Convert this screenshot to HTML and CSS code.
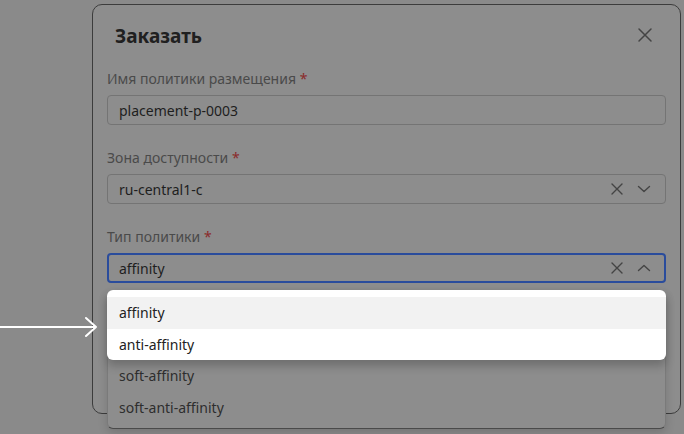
FILE: index.html
```html
<!DOCTYPE html>
<html lang="ru">
<head>
<meta charset="utf-8">
<link rel="stylesheet" href="styles.css">
</head>
<body>
<div class="modal">
  <div class="header">
    <div class="title">Заказать</div>
    <svg class="close" width="16" height="16" viewBox="0 0 16 16"><path d="M2 2L14 14M14 2L2 14" stroke="#444" stroke-width="1.5" fill="none" stroke-linecap="round"/></svg>
  </div>
  <div class="fields">
    <div class="field">
      <div class="label">Имя политики размещения <span class="req">*</span></div>
      <div class="input"><span class="val">placement-p-0003</span></div>
    </div>
    <div class="field">
      <div class="label">Зона доступности <span class="req">*</span></div>
      <div class="input"><span class="val">ru-central1-c</span>
        <span class="icons">
          <svg width="14" height="14" viewBox="0 0 14 14"><path d="M2 2L12 12M12 2L2 12" stroke="#444" stroke-width="1.4" fill="none" stroke-linecap="round"/></svg>
          <svg width="14" height="14" viewBox="0 0 14 14"><path d="M1.5 4.5L7 9.5L12.5 4.5" stroke="#444" stroke-width="1.4" fill="none" stroke-linecap="round" stroke-linejoin="round"/></svg>
        </span>
      </div>
    </div>
    <div class="field open">
      <div class="label">Тип политики <span class="req">*</span></div>
      <div class="input focus"><span class="val">affinity</span>
        <span class="icons">
          <svg width="14" height="14" viewBox="0 0 14 14"><path d="M2 2L12 12M12 2L2 12" stroke="#444" stroke-width="1.4" fill="none" stroke-linecap="round"/></svg>
          <svg width="14" height="14" viewBox="0 0 14 14"><path d="M1.5 9.5L7 4.5L12.5 9.5" stroke="#444" stroke-width="1.4" fill="none" stroke-linecap="round" stroke-linejoin="round"/></svg>
        </span>
      </div>
      <div class="dropdown">
        <div class="hl">
          <div class="item active">affinity</div>
          <div class="item">anti-affinity</div>
        </div>
        <div class="item dim">soft-affinity</div>
        <div class="item dim">soft-anti-affinity</div>
      </div>
    </div>
  </div>
</div>
<svg class="arrow" width="100" height="24" viewBox="0 0 100 24"><path d="M0 11H96M86 2L96 11L86 20" stroke="#fff" stroke-width="2" fill="none" stroke-linecap="round" stroke-linejoin="round"/></svg>
</body>
</html>
```
FILE: styles.css
```css
* { box-sizing: border-box; }
html, body { margin: 0; height: 100%; }
body {
  background: #8a8a8a;
  font-family: "Noto Sans", "DejaVu Sans", sans-serif;
  padding: 4px 0 0 92px;
  overflow: hidden;
  position: relative;
}
.modal {
  width: 589px;
  height: 410px;
  background: #8d8d8d;
  border: 1.5px solid #3c3c3c;
  border-radius: 10px;
  padding: 0 14px;
}
.header {
  display: flex;
  align-items: center;
  justify-content: space-between;
  padding-top: 19px;
  height: 43px;
}
.title {
  font-size: 19px;
  font-weight: 700;
  color: #202020;
  line-height: 24px;
  margin-left: 8px;
}
.close { margin-right: 13px; margin-top: -2px; }
.fields {
  display: flex;
  flex-direction: column;
  gap: 24px;
  margin-top: 22px;
}
.field { position: relative; }
.label {
  font-size: 14px;
  line-height: 18px;
  color: #4a4a4a;
  margin-bottom: 7px;
}
.req { color: #8b2a2a; }
.input {
  height: 30px;
  border: 1px solid #747474;
  border-radius: 4px;
  display: flex;
  align-items: center;
  padding: 0 14px 0 11px;
  font-size: 14px;
  color: #1e1e1e;
}
.input.focus { border: 2px solid #2a4c9c; padding-left: 10px; padding-right: 13px; }
.val { flex: 1; }
.icons { display: flex; gap: 13px; align-items: center; }
.dropdown {
  position: absolute;
  left: 0;
  right: 0;
  top: 62px;
  height: 139px;
  background: #8d8d8d;
  border: 1px solid #7a7a7a;
  border-bottom-color: #4a4a4a;
  border-top: none;
  border-radius: 6px;
  box-shadow: 0 4px 10px rgba(0,0,0,0.15);
  padding-bottom: 6px;
}
.hl {
  background: #fff;
  border-radius: 6px;
  padding-top: 7px;
  margin: 0 -1px;
  box-shadow: 0 6px 10px rgba(0,0,0,0.22);
  position: relative;
}
.item {
  height: 31.5px;
  display: flex;
  align-items: center;
  padding: 0 12px;
  font-size: 14px;
  color: #222;
}
.hl .item { padding-left: 12px; }
.item.active { background: #f2f2f2; }
.item.dim { color: #2e2e2e; padding-left: 11px; }
.arrow {
  position: absolute;
  left: 0;
  top: 316px;
}
```
